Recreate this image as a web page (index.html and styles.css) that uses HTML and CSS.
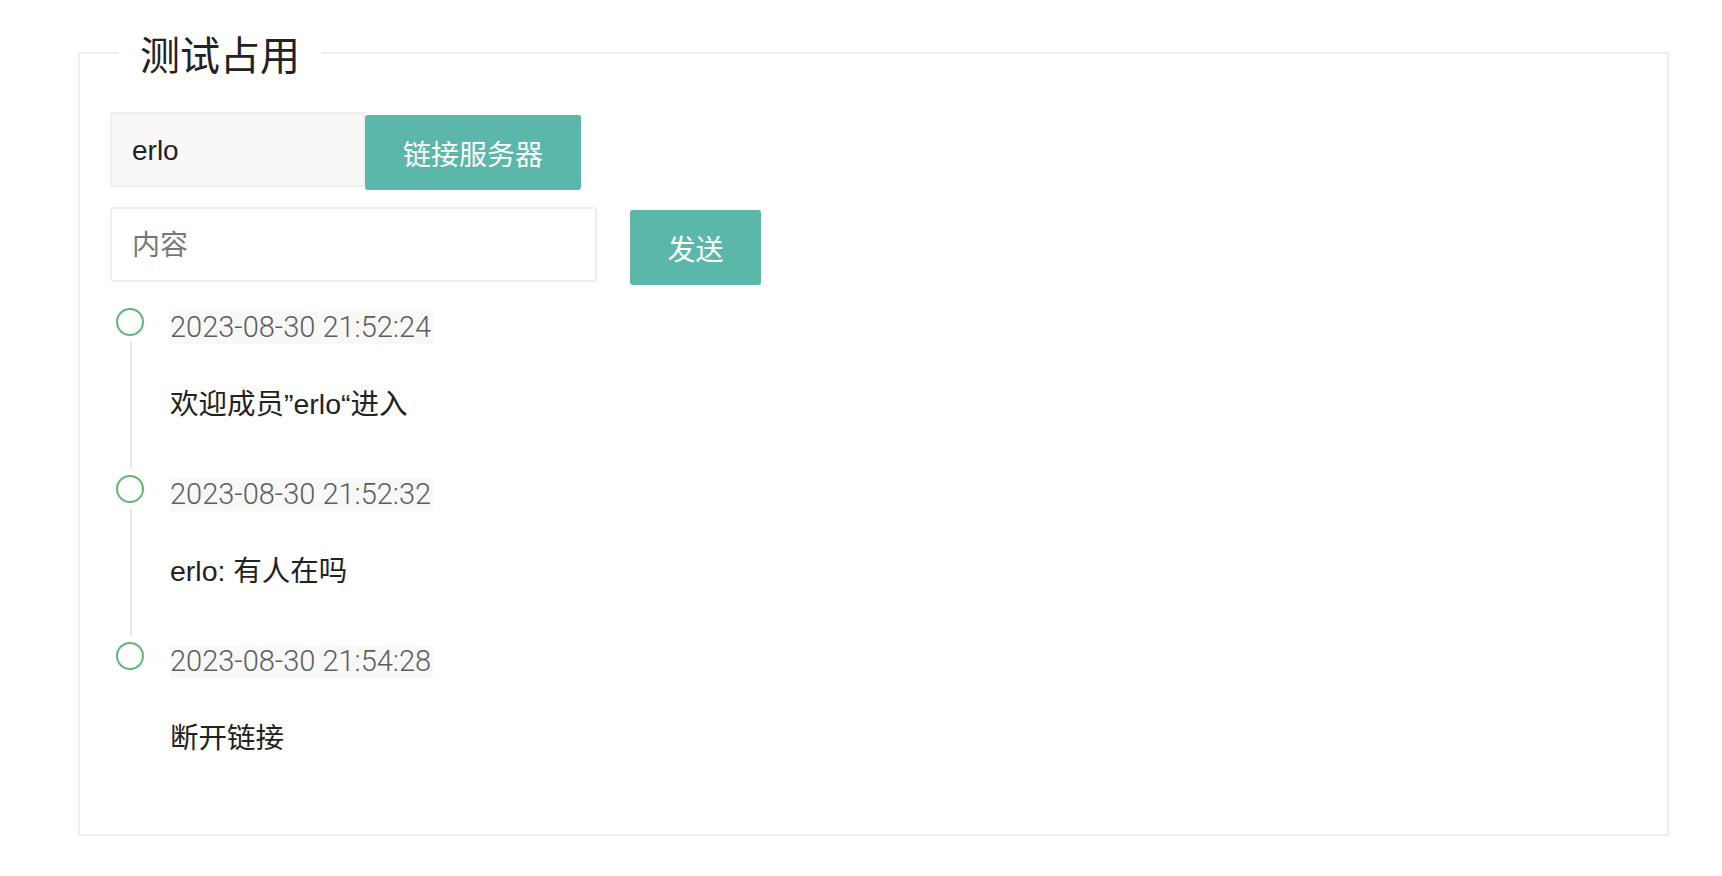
FILE: index.html
```html
<!DOCTYPE html>
<html lang="zh">
<head>
<meta charset="utf-8">
<title>测试占用</title>
<link rel="stylesheet" href="styles.css">
</head>
<body>
<fieldset class="panel">
  <legend class="panel-title">测试占用</legend>
  <div class="row row-connect">
    <input class="field field-name" type="text" value="erlo" readonly>
    <button class="btn btn-connect">链接服务器</button>
  </div>
  <div class="row row-send">
    <input class="field field-msg" type="text" placeholder="内容">
    <button class="btn btn-send">发送</button>
  </div>
  <ul class="timeline">
    <li class="tl-item">
      <span class="tl-axis"><span class="tl-dot"></span></span>
      <div class="tl-body">
        <div class="tl-title"><span class="tl-time">2023-08-30 21:52:24</span></div>
        <p class="tl-text">欢迎成员”erlo“进入</p>
      </div>
    </li>
    <li class="tl-item">
      <span class="tl-axis"><span class="tl-dot"></span></span>
      <div class="tl-body">
        <div class="tl-title"><span class="tl-time">2023-08-30 21:52:32</span></div>
        <p class="tl-text">erlo: 有人在吗</p>
      </div>
    </li>
    <li class="tl-item">
      <span class="tl-axis"><span class="tl-dot"></span></span>
      <div class="tl-body">
        <div class="tl-title"><span class="tl-time">2023-08-30 21:54:28</span></div>
        <p class="tl-text">断开链接</p>
      </div>
    </li>
  </ul>
</fieldset>
</body>
</html>
```
FILE: styles.css
```css
html, body {
  margin: 0;
  padding: 0;
  background: #fff;
}
body {
  font-family: "Liberation Sans", "Noto Sans CJK SC", sans-serif;
  color: #333;
}
.panel {
  margin: 25px 53px 0 78px;
  padding: 0 28px 31px 30px;
  border: 2px solid #eeeeee;
  min-width: 0;
}
.panel-title {
  margin-left: 8px;
  padding: 0 22px;
  font-family: "Noto Sans CJK SC", sans-serif;
  font-size: 40px;
  line-height: 56px;
  color: #222;
}
.row {
  display: flex;
  align-items: flex-start;
}
.row-connect {
  margin-top: 31px;
}
.row-send {
  margin-top: 17px;
}
.field {
  box-sizing: border-box;
  height: 75px;
  border: 2px solid #eeeeee;
  border-radius: 3px;
  padding: 2px 20px 0;
  font-family: "Liberation Sans", "Noto Sans CJK SC", sans-serif;
  font-size: 28px;
  color: #222;
  outline: none;
}
.field::placeholder {
  color: #777;
  font-family: "Noto Sans CJK SC", sans-serif;
}
.field-name {
  width: 255px;
  background: #f8f8f8;
}
.field-msg {
  width: 487px;
  background: #fff;
}
.btn {
  box-sizing: border-box;
  height: 75px;
  margin-top: 3px;
  border: none;
  border-radius: 3px;
  background: #5ab7a9;
  color: #fff;
  font-family: "Noto Sans CJK SC", sans-serif;
  font-size: 28px;
  cursor: pointer;
}
.btn-connect {
  width: 216px;
}
.btn-send {
  width: 131px;
  margin-left: 33px;
}
.timeline {
  list-style: none;
  margin: 17px 0 0 0;
  padding: 0;
}
.tl-item {
  position: relative;
  height: 167px;
}
.tl-item::before {
  content: "";
  position: absolute;
  left: 20px;
  top: 0;
  bottom: 0;
  border-left: 2px solid #e8e8e8;
}
.tl-item:last-child::before {
  display: none;
}
.tl-axis {
  position: absolute;
  left: 0;
  top: 0;
  width: 40px;
  height: 40px;
  background: #fff;
  display: flex;
  align-items: center;
  justify-content: center;
}
.tl-dot {
  box-sizing: border-box;
  width: 28px;
  height: 28px;
  border: 2.5px solid #5fb878;
  border-radius: 50%;
}
.tl-body {
  padding-left: 60px;
}
.tl-title {
  height: 44px;
  line-height: 44px;
  font-size: 29px;
}
.tl-time {
  display: inline-block;
  height: 33px;
  line-height: 33px;
  vertical-align: -3px;
  background: #f8f8f8;
  color: #5e5e5e;
  font-family: "Roboto", "Liberation Sans", sans-serif;
  font-weight: 300;
  padding-right: 2px;
}
.tl-text {
  margin: 36px 0 0 0;
  line-height: 44px;
  font-size: 28.5px;
  color: #222;
}
```
